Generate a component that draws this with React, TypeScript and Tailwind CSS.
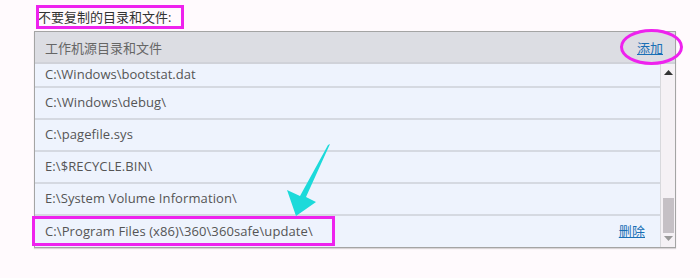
import React from "react";

const rows = [
  "C:\\Windows\\debug\\",
  "C:\\pagefile.sys",
  "E:\\$RECYCLE.BIN\\",
  "E:\\System Volume Information\\",
  "C:\\Program Files (x86)\\360\\360safe\\update\\",
];

const font = { fontFamily: '"Segoe UI", "Open Sans", "Noto Sans CJK SC", sans-serif' };

export default function App() {
  return (
    <div
      className="relative w-[700px] h-[278px] bg-[#fffafd] overflow-hidden text-[13px]"
      style={font}
    >
      <div className="pl-[38px] pt-[7px] h-[31px] leading-[20px] text-[#333]">
        不要复制的目录和文件:
      </div>
      <div className="ml-[34px] w-[642px] border border-[#a4a4a4] shadow-[0_1px_1px_rgba(0,0,0,0.15)]">
        <div className="h-[32px] bg-[#dcdde3] border-b-2 border-[#d0d2d9] flex items-center justify-between pt-[3px] pl-[10px] pr-[12px] text-[#666]">
          <span>工作机源目录和文件</span>
          <a className="text-[#1a6fb5] underline">添加</a>
        </div>
        <div className="flex h-[183px]">
          <div className="flex-1 bg-[#eef3fd]">
            <div className="h-[24px] border-b-2 border-[#d5d9e1] pl-[10px] pt-[1px] leading-[18px] text-[#555]">
              C:\Windows\bootstat.dat
            </div>
            {rows.map((r, i) => (
              <div
                key={i}
                className={
                  "h-[32px] flex items-center justify-between pl-[10px] pr-[15px] text-[#555] tracking-[0.1px] " +
                  (i < rows.length - 1 ? "border-b-2 border-[#d5d9e1]" : "")
                }
              >
                <span>{r}</span>
                {i === rows.length - 1 && (
                  <a className="text-[#1a6fb5] underline">删除</a>
                )}
              </div>
            ))}
          </div>
          <div className="w-[15px] bg-[#f5f1f5] border-l border-[#d8d8dc] flex flex-col items-center">
            <svg width="9" height="6" viewBox="0 0 9 6" className="mt-[6px]">
              <polygon points="4.5,0 9,5 0,5" fill="#333" />
            </svg>
            <div className="flex-1" />
            <div className="w-[11px] h-[35px] bg-[#c5c0c5]" />
            <svg width="9" height="6" viewBox="0 0 9 6" className="mt-[3px] mb-[5px]">
              <polygon points="0,0 9,0 4.5,5" fill="#999" />
            </svg>
          </div>
        </div>
      </div>

      {/* annotations */}
      <div className="absolute left-[36px] top-[5px] w-[148px] h-[24px] border-[3px] border-[#ee22ee]" />
      <div className="absolute left-[620px] top-[29px] w-[63px] h-[36px] rounded-[50%] border-[3px] border-[#ee22ee]" />
      <div className="absolute left-[32px] top-[216px] w-[303px] h-[30px] border-[3px] border-[#ee22ee]" />
      <svg className="absolute left-0 top-0" width="700" height="278">
        <polygon
          points="330,144 306,197 316,202 296,216 287,190 300,196 328,145"
          fill="#1cdada"
        />
      </svg>
    </div>
  );
}
